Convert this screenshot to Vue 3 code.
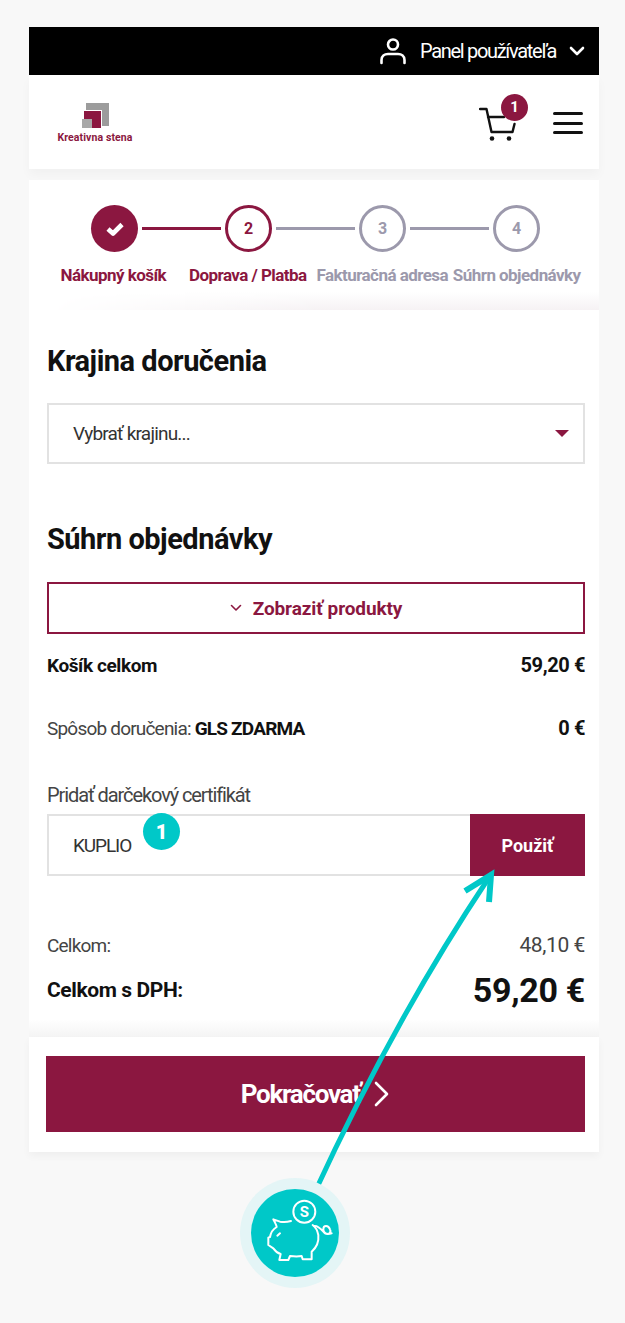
<script setup>
const steps = [
  { label: 'Nákupný košík', state: 'done' },
  { label: 'Doprava / Platba', state: 'active', num: 2 },
  { label: 'Fakturačná adresa', state: 'todo', num: 3 },
  { label: 'Súhrn objednávky', state: 'todo', num: 4 },
]
</script>

<template>
  <div class="page">
    <div class="shell">
      <div class="topbar">
        <svg class="user-icon" width="26" height="28" viewBox="0 0 26 28" fill="none" stroke="#fff" stroke-width="2.6" stroke-linecap="round">
          <circle cx="13" cy="7.500" r="5" />
          <path d="M1.500 26v-3c0-4 3-6 6.500-6h10c3.500 0 6.500 2 6.500 6v3" />
        </svg>
        <span>Panel používateľa</span>
        <svg class="top-chevron" width="16" height="10" viewBox="0 0 16 10" fill="none" stroke="#fff" stroke-width="2.6" stroke-linecap="round" stroke-linejoin="round">
          <path d="M2 2l6 6 6-6" />
        </svg>
      </div>

      <header class="header">
        <div class="logo">
          <svg width="27" height="25" viewBox="0 0 27 25">
            <rect x="4" y="0" width="23" height="23" fill="#9c9c9c" />
            <rect x="1" y="7" width="19" height="18" fill="#fff" />
            <rect x="2" y="8" width="17" height="17" fill="#8b1740" />
            <rect x="0" y="16" width="10" height="9" fill="#a8a8a8" />
          </svg>
          <span class="logo-text">Kreativna stena</span>
        </div>
        <div class="header-actions">
          <div class="cart">
            <svg width="38" height="38" viewBox="0 0 38 38" fill="none" stroke="#111" stroke-width="2.4" stroke-linecap="round" stroke-linejoin="round">
              <path d="M1 3h6.500l5 23h21l2-8" />
              <path d="M9 11h16" />
              <circle cx="13" cy="32.500" r="2.300" fill="#111" stroke="none" />
              <circle cx="30" cy="32.500" r="2.300" fill="#111" stroke="none" />
            </svg>
            <span class="cart-badge">1</span>
          </div>
          <div class="burger">
            <span></span>
            <span></span>
            <span></span>
          </div>
        </div>
      </header>

      <section class="stepper">
        <div class="track">
          <template v-for="(s, i) in steps" :key="s.label">
            <div :class="['circle', `circle--${s.state}`]">
              <svg v-if="s.state === 'done'" width="18" height="14" viewBox="0 0 18 14" fill="none" stroke="#fff" stroke-width="4.600" stroke-linejoin="round">
                <path d="M2 7l5 4.500 9-9" />
              </svg>
              <template v-else>{{ s.num }}</template>
            </div>
            <div v-if="i < 3" :class="['line', i === 0 ? 'line--on' : '']"></div>
          </template>
        </div>
        <div class="labels">
          <span v-for="s in steps" :key="s.label" :class="['label', s.state === 'todo' ? 'label--off' : '']">{{ s.label }}</span>
        </div>
        <div class="stepper-fade"></div>
      </section>

      <main class="content">
        <h2 class="title">Krajina doručenia</h2>
        <div class="select">
          <span>Vybrať krajinu...</span>
          <i class="caret"></i>
        </div>

        <h2 class="title title--second">Súhrn objednávky</h2>
        <div class="show-products">
          <svg width="12" height="8" viewBox="0 0 12 8" fill="none" stroke="#8b1740" stroke-width="1.600" stroke-linecap="round" stroke-linejoin="round">
            <path d="M1.500 1.500L6 6l4.500-4.500" />
          </svg>
          <span>Zobraziť produkty</span>
        </div>

        <div class="row row--cart">
          <b>Košík celkom</b>
          <b class="price">59,20 €</b>
        </div>
        <div class="row row--ship">
          <span class="light">Spôsob doručenia: <b>GLS ZDARMA</b></span>
          <b class="price">0 €</b>
        </div>

        <label class="cert-label">Pridať darčekový certifikát</label>
        <div class="cert">
          <div class="cert-input">KUPLIO</div>
          <div class="cert-btn">Použiť</div>
        </div>

        <div class="row row--sum">
          <span class="light">Celkom:</span>
          <span class="light price">48,10 €</span>
        </div>
        <div class="row row--total">
          <b>Celkom s DPH:</b>
          <b class="total-price">59,20 €</b>
        </div>
      </main>

      <footer class="footer">
        <div class="continue">
          <span>Pokračovať</span>
          <svg width="16" height="26" viewBox="0 0 16 26" fill="none" stroke="#fff" stroke-width="2.600" stroke-linecap="round" stroke-linejoin="round">
            <path d="M2 2l11 11L2 24" />
          </svg>
        </div>
      </footer>
    </div>

    <span class="marker">1</span>

    <svg class="overlay" width="625" height="1323" viewBox="0 0 625 1323" fill="none">
      <path d="M313 1196Q394 1020 488 879" stroke="#00c8c8" stroke-width="5" />
      <path d="M465 891L491 875L489 902" stroke="#00c8c8" stroke-width="6" />
      <circle cx="295" cy="1233" r="55" fill="#e4f5f6" />
      <circle cx="295" cy="1233" r="44" fill="#00c8c8" />
      <g transform="translate(220 1170) scale(.3333)" stroke="#fff" stroke-width="6" stroke-linecap="round" stroke-linejoin="round">
        <circle cx="253" cy="125" r="33" />
        <path d="M213 153C200 157 190 157 180 155L160 148C163 155 170 165 170 171C158 178 152 190 150 201L145 203V225L160 235C165 242 175 250 182 252L178 270H205L210 258C225 260 235 260 245 258L248 268H275V245C290 232 297 215 295 195C292 180 285 170 278 165" />
        <path d="M282 168C295 165 305 180 315 190C325 195 335 188 330 178C325 165 310 165 310 178C310 190 320 195 335 190" />
        <path d="M180 190L172 197" />
      </g>
      <text x="304.300" y="1217" class="coin-s">S</text>
    </svg>
  </div>
</template>

<style>
html, body {
  margin: 0;
  background: #f8f8f8;
}
</style>

<style scoped>
.page {
  position: relative;
  width: 625px;
  height: 1323px;
  overflow: hidden;
  padding: 27px 26px 0 29px;
  box-sizing: border-box;
  background: #f8f8f8;
  font-family: "Roboto", "Liberation Sans", sans-serif;
  color: #111;
}

.shell {
  width: 570px;
}

.topbar {
  height: 48px;
  background: #000;
  color: #fff;
  display: flex;
  align-items: center;
  justify-content: flex-end;
  padding-right: 14px;
  font-size: 20px;
  letter-spacing: -1.3px;
}

.user-icon {
  margin-right: 14px;
}

.top-chevron {
  margin-left: 13px;
}

.header {
  height: 94px;
  background: #fff;
  box-shadow: 0 6px 10px rgba(0, 0, 0, 0.03);
  display: flex;
  align-items: center;
  justify-content: space-between;
  padding: 0 16px 0 28px;
}

.logo {
  display: flex;
  flex-direction: column;
  align-items: center;
  width: 76px;
  margin-top: 3px;
}

.logo-text {
  font-size: 10.500px;
  font-weight: 700;
  color: #8b1740;
  white-space: nowrap;
  margin-top: 3px;
  letter-spacing: 0.1px;
}

.header-actions {
  display: flex;
  align-items: center;
}

.cart {
  position: relative;
  width: 38px;
  height: 38px;
  margin-right: 36px;
  margin-top: 5px;
}

.cart-badge {
  position: absolute;
  top: -12px;
  left: 22px;
  width: 27px;
  height: 27px;
  border-radius: 50%;
  background: #8b1740;
  color: #fff;
  font-size: 15px;
  font-weight: 700;
  display: flex;
  align-items: center;
  justify-content: center;
}

.burger {
  display: flex;
  flex-direction: column;
  gap: 6.500px;
  width: 30px;
  margin-top: 2px;
}

.burger span {
  height: 3px;
  background: #111;
  border-radius: 2px;
}

.stepper {
  margin-top: 11px;
  padding-top: 25px;
  height: 105px;
  background: #fff;
}

.track {
  display: flex;
  align-items: center;
  padding-left: 62px;
}

.circle {
  width: 47px;
  height: 47px;
  border-radius: 50%;
  box-sizing: border-box;
  display: flex;
  align-items: center;
  justify-content: center;
  font-size: 16px;
  font-weight: 700;
  flex: none;
}

.circle--done {
  background: #8b1740;
}

.circle--active {
  border: 3px solid #8b1740;
  color: #8b1740;
}

.circle--todo {
  border: 3px solid #9c99ac;
  color: #9c99ac;
}

.line {
  width: 79px;
  height: 3px;
  margin: 0 4px;
  background: #9c99ac;
  flex: none;
}

.line--on {
  background: #8b1740;
}

.labels {
  display: grid;
  grid-template-columns: repeat(4, 134.500px);
  padding-left: 17px;
  margin-top: 13px;
}

.label {
  text-align: center;
  white-space: nowrap;
  font-size: 17px;
  font-weight: 700;
  letter-spacing: -0.55px;
  color: #8b1740;
}

.label--off {
  color: #9c99ac;
}

.stepper-fade {
  height: 18px;
  margin: 7px 0 0 18px;
  background: linear-gradient(to bottom, #fff, #f6f2f4);
  -webkit-mask-image: linear-gradient(to right, transparent, #000 50%);
  mask-image: linear-gradient(to right, transparent, #000 50%);
}

.content {
  background: linear-gradient(to bottom, #fff calc(100% - 18px), #f4f4f4 100%);
  padding: 34px 14px 0 18px;
  height: 727px;
  box-sizing: border-box;
}

.title {
  margin: 0;
  font-size: 29px;
  line-height: 34px;
  font-weight: 700;
  letter-spacing: -0.5px;
  color: #111;
}

.title--second {
  margin-top: 58px;
}

.select {
  margin-top: 25px;
  height: 61px;
  box-sizing: border-box;
  border: 2px solid #e2e2e2;
  padding: 0 14px 0 24px;
  display: flex;
  align-items: center;
  justify-content: space-between;
  font-size: 19px;
  letter-spacing: -0.8px;
  color: #333;
}

.caret {
  width: 0;
  height: 0;
  border-left: 7px solid transparent;
  border-right: 7px solid transparent;
  border-top: 7px solid #8b1740;
}

.show-products {
  margin-top: 26px;
  height: 52px;
  box-sizing: border-box;
  border: 2px solid #8b1740;
  display: flex;
  align-items: center;
  justify-content: center;
  gap: 11px;
  font-size: 19px;
  font-weight: 700;
  letter-spacing: -0.1px;
  color: #8b1740;
}

.row {
  display: flex;
  justify-content: space-between;
  align-items: center;
  font-size: 19px;
  letter-spacing: -0.4px;
}

.row b {
  font-weight: 700;
}

.price {
  font-size: 20px;
}

.light {
  color: #444;
  font-weight: 400;
  letter-spacing: -0.8px;
}

.light b {
  color: #111;
}

.row--cart {
  margin-top: 17px;
  height: 28px;
}

.row--ship {
  margin-top: 35px;
  height: 28px;
}

.cert-label {
  display: block;
  margin-top: 40px;
  height: 26px;
  font-size: 20px;
  line-height: 26px;
  letter-spacing: -1.1px;
  color: #444;
}

.cert {
  display: flex;
  height: 62px;
  margin-top: 6px;
}

.cert-input {
  flex: 1;
  box-sizing: border-box;
  border: 2px solid #e2e2e2;
  border-right: 0;
  padding-left: 24px;
  display: flex;
  align-items: center;
  font-size: 19px;
  letter-spacing: -1.1px;
  color: #333;
}

.cert-btn {
  width: 115px;
  background: #8b1740;
  color: #fff;
  display: flex;
  align-items: center;
  justify-content: center;
  font-size: 18px;
  font-weight: 700;
}

.row--sum {
  margin-top: 55px;
  height: 28px;
}

.row--sum .price {
  font-size: 21px;
  letter-spacing: -0.4px;
}

.row--total {
  margin-top: 13px;
  height: 36px;
  font-size: 21px;
}

.total-price {
  font-size: 34px;
  letter-spacing: -0.3px;
}

.footer {
  background: #fff;
  height: 115px;
  box-sizing: border-box;
  padding: 19px 14px 0 17px;
  box-shadow: 0 4px 8px rgba(0, 0, 0, 0.04);
}

.continue {
  height: 76px;
  background: #8b1740;
  color: #fff;
  display: flex;
  align-items: center;
  justify-content: center;
  gap: 14px;
  font-size: 26px;
  font-weight: 700;
  letter-spacing: -1.3px;
}

.marker {
  position: absolute;
  left: 143px;
  top: 813px;
  width: 37px;
  height: 37px;
  border-radius: 50%;
  background: #00c8c8;
  color: #fff;
  font-size: 20px;
  font-weight: 900;
  display: flex;
  align-items: center;
  justify-content: center;
}

.overlay {
  position: absolute;
  inset: 0;
  pointer-events: none;
}

.coin-s {
  fill: #fff;
  font-size: 15px;
  font-weight: 700;
  text-anchor: middle;
}
</style>
